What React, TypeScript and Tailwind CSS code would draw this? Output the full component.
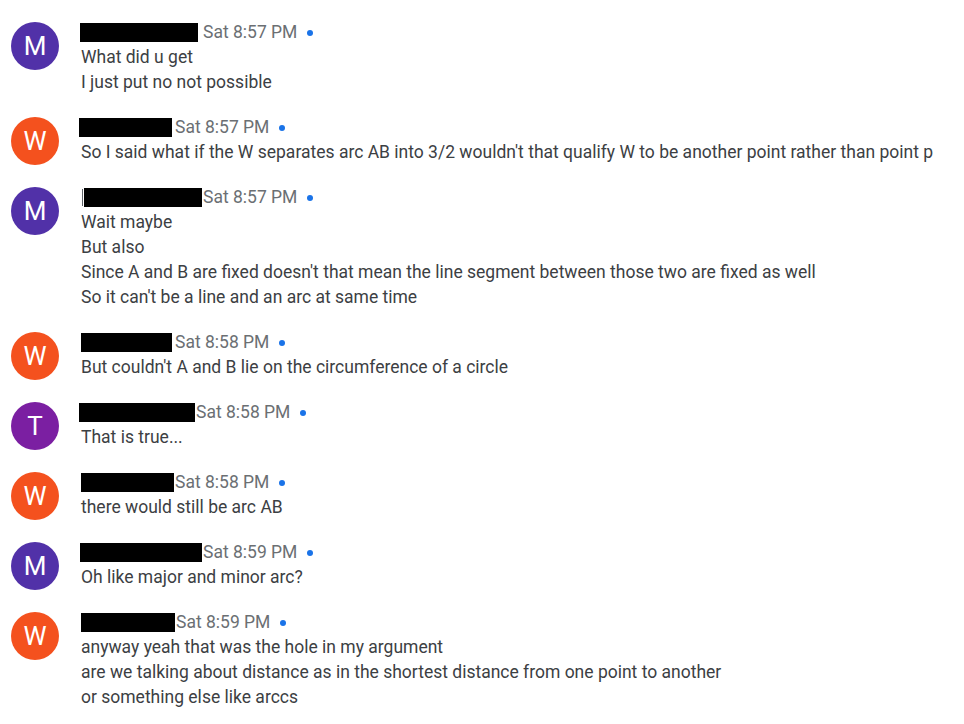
const messages = [
  { initial: 'M', color: 'bg-[#5131a8]', nameW: 'w-[118px]', nameMl: 'ml-[-1px]', timeMl: 'ml-[5px]', time: 'Sat 8:57 PM', lines: ['What did u get', 'I just put no not possible'] },
  { initial: 'W', color: 'bg-[#f4511e]', nameW: 'w-[93px]', nameMl: 'ml-[-2px]', timeMl: 'ml-[3px]', time: 'Sat 8:57 PM', lines: ["So I said what if the W separates arc AB into 3/2 wouldn't that qualify W to be another point rather than point p"] },
  { initial: 'M', color: 'bg-[#5131a8]', nameW: 'w-[118px]', nameMl: 'ml-0', timeMl: 'ml-[1px]', time: 'Sat 8:57 PM', lines: ['Wait maybe', 'But also', "Since A and B are fixed doesn't that mean the line segment between those two are fixed as well", "So it can't be a line and an arc at same time"], mark: true },
  { initial: 'W', color: 'bg-[#f4511e]', nameW: 'w-[91px]', nameMl: 'ml-0', timeMl: 'ml-[3px]', time: 'Sat 8:58 PM', lines: ["But couldn't A and B lie on the circumference of a circle"] },
  { initial: 'T', color: 'bg-[#7b1fa2]', nameW: 'w-[116px]', nameMl: 'ml-[-2px]', timeMl: 'ml-[1px]', time: 'Sat 8:58 PM', lines: ['That is true...'] },
  { initial: 'W', color: 'bg-[#f4511e]', nameW: 'w-[93px]', nameMl: 'ml-0', timeMl: 'ml-[1px]', time: 'Sat 8:58 PM', lines: ['there would still be arc AB'] },
  { initial: 'M', color: 'bg-[#5131a8]', nameW: 'w-[122px]', nameMl: 'ml-[-1px]', timeMl: 'ml-[1px]', time: 'Sat 8:59 PM', lines: ['Oh like major and minor arc?'] },
  { initial: 'W', color: 'bg-[#f4511e]', nameW: 'w-[94px]', nameMl: 'ml-0', timeMl: 'ml-[1px]', time: 'Sat 8:59 PM', lines: ['anyway yeah that was the hole in my argument', 'are we talking about distance as in the shortest distance from one point to another', 'or something else like arccs'] },
];

export default function App() {
  return (
    <div className="w-[964px] h-[724px] overflow-hidden bg-white pt-[20px] font-['Roboto',sans-serif] text-[17.5px] leading-[25px] text-[#3c4043]">
      <div className="space-y-5">
        {messages.map((m, i) => (
          <div key={i} className="flex items-start">
            <div className={`ml-[11px] mt-[2px] w-[48px] h-[48px] shrink-0 rounded-full ${m.color} flex items-center justify-center text-white text-[26px]`}>
              {m.initial}
            </div>
            <div className="ml-[22px]">
              <div className="flex items-center h-[25px]">
                {m.mark && <span className="ml-[1px] w-[1px] h-[17px] bg-[#5f6368] mr-[1px]" />}
                <span className={`${m.nameW} ${m.nameMl} h-[19px] bg-black`} />
                <span className={`${m.timeMl} text-[#6b6f73]`}>{m.time}</span>
                <span className="ml-[10px] w-[6px] h-[6px] rounded-full bg-[#1a73e8]" />
              </div>
              {m.lines.map((l, j) => (
                <div key={j} className="whitespace-nowrap">{l}</div>
              ))}
            </div>
          </div>
        ))}
      </div>
    </div>
  );
}
